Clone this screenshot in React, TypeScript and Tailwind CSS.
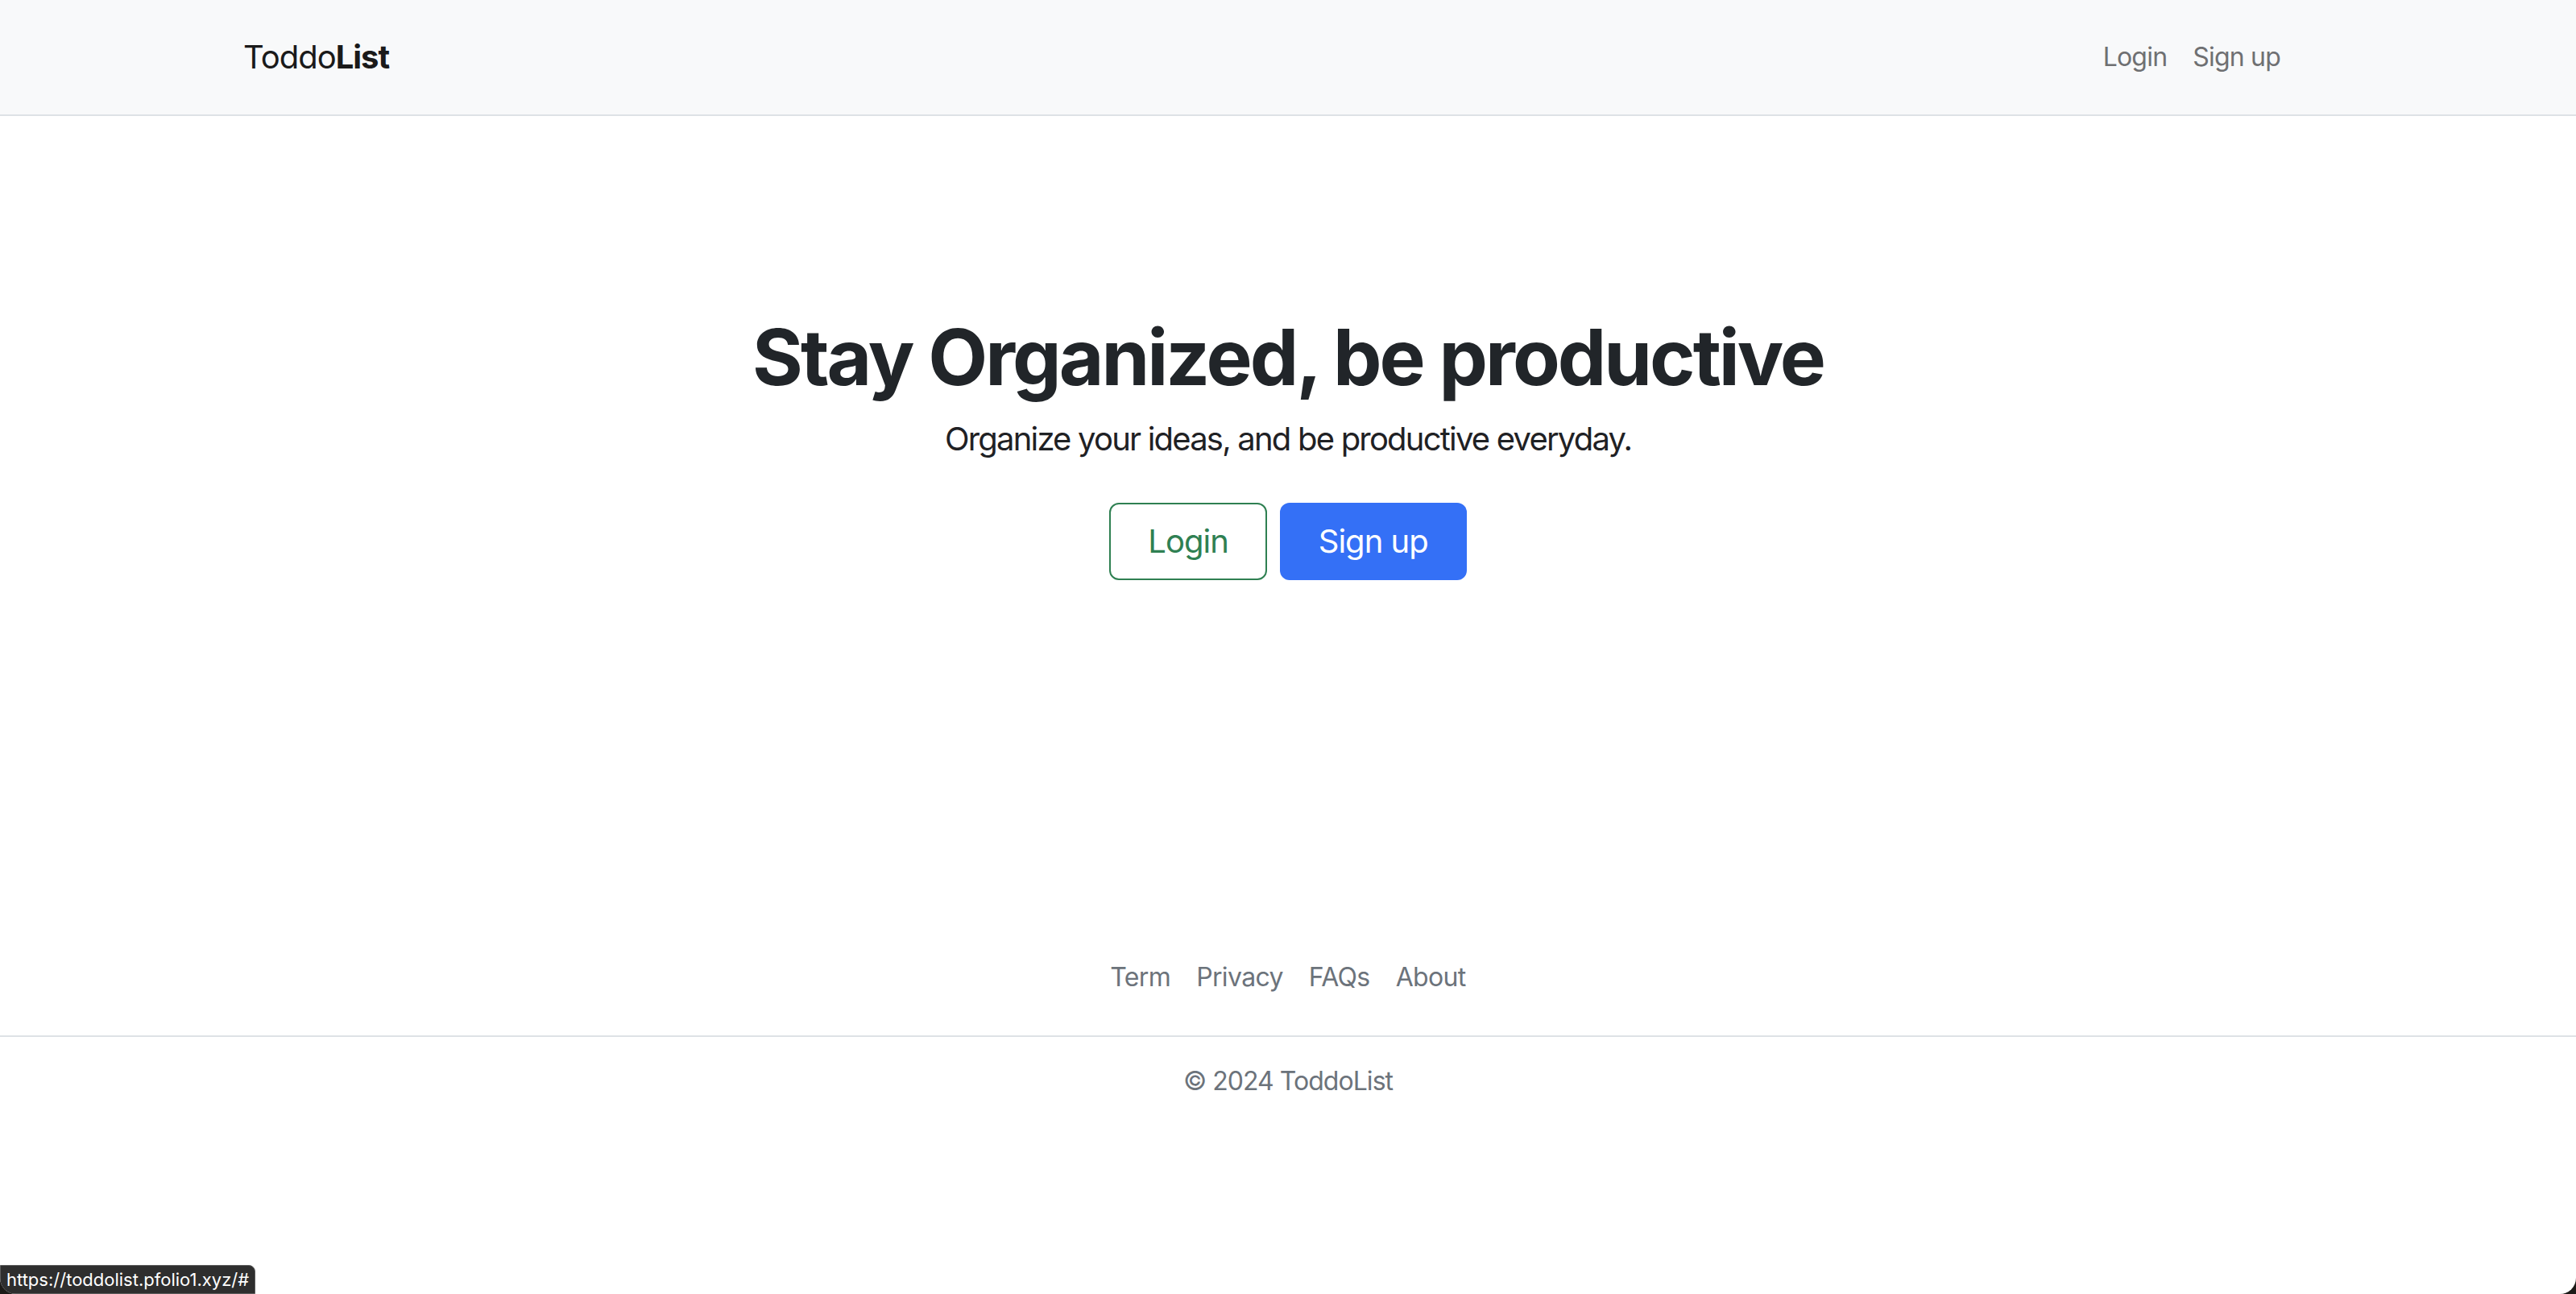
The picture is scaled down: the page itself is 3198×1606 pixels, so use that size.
import React from "react";

const footerLinks = ["Term", "Privacy", "FAQs", "About"];

export default function App() {
  return (
    <div className="h-[1606px] w-full bg-[#1c1a17] font-['Inter',sans-serif]">
      <div className="relative flex h-full flex-col overflow-hidden rounded-b-[20px] bg-white">
        {/* navbar */}
        <header className="flex h-[144px] shrink-0 items-center border-b-2 border-[#dee2e6] bg-[#f8f9fa]">
          <a href="#" className="ml-[302px] text-[40px] leading-[60px] tracking-[-0.025em] text-[#1a1a1a]">
            Toddo<span className="font-bold">List</span>
          </a>
          <nav className="ml-auto mr-[351px] flex">
            <a href="#" className="px-4 text-[32px] leading-[48px] tracking-[-0.025em] text-[#6f7072]">
              Login
            </a>
            <a href="#" className="px-4 text-[32px] leading-[48px] tracking-[-0.025em] text-[#6f7072]">
              Sign up
            </a>
          </nav>
        </header>

        {/* hero */}
        <section className="mt-[242px] flex flex-col items-center text-center">
          <h1 className="text-[96px] leading-[115px] font-bold tracking-[-0.031em] text-[#212529]">
            Stay Organized, be productive
          </h1>
          <p className="mt-[14px] text-[40px] leading-[60px] tracking-[-0.045em] text-[#1f2124]">
            Organize your ideas, and be productive everyday.
          </p>
          <div className="mt-[49px] flex gap-[16px]">
            <a
              href="#"
              className="flex h-[96px] items-center rounded-[12px] border-2 border-[#2f8052] px-[46px] text-[40px] tracking-[-0.025em] text-[#2f8052]"
            >
              Login
            </a>
            <a
              href="#"
              className="flex h-[96px] items-center rounded-[12px] bg-[#3470f6] px-[48px] text-[40px] tracking-[-0.025em] text-white"
            >
              Sign up
            </a>
          </div>
        </section>

        {/* footer */}
        <footer className="mt-[453px]">
          <ul className="flex justify-center border-b-2 border-[#dee2e6] pb-[32px]">
            {footerLinks.map((l) => (
              <li key={l}>
                <a href="#" className="block px-4 py-4 text-[32px] leading-[48px] tracking-[-0.02em] text-[#6c737b]">
                  {l}
                </a>
              </li>
            ))}
          </ul>
          <p className="mt-[31px] text-center text-[32px] leading-[48px] tracking-[-0.03em] text-[#6c737b]">
            © 2024 ToddoList
          </p>
        </footer>

        {/* hover status url */}
        <div className="absolute bottom-0 left-0 flex h-[36px] items-center rounded-tr-[8px] border border-[#5c5c5c] bg-[#2e2e2e] px-[7px] text-[22px] text-white">
          https://toddolist.pfolio1.xyz/#
        </div>
      </div>
    </div>
  );
}
